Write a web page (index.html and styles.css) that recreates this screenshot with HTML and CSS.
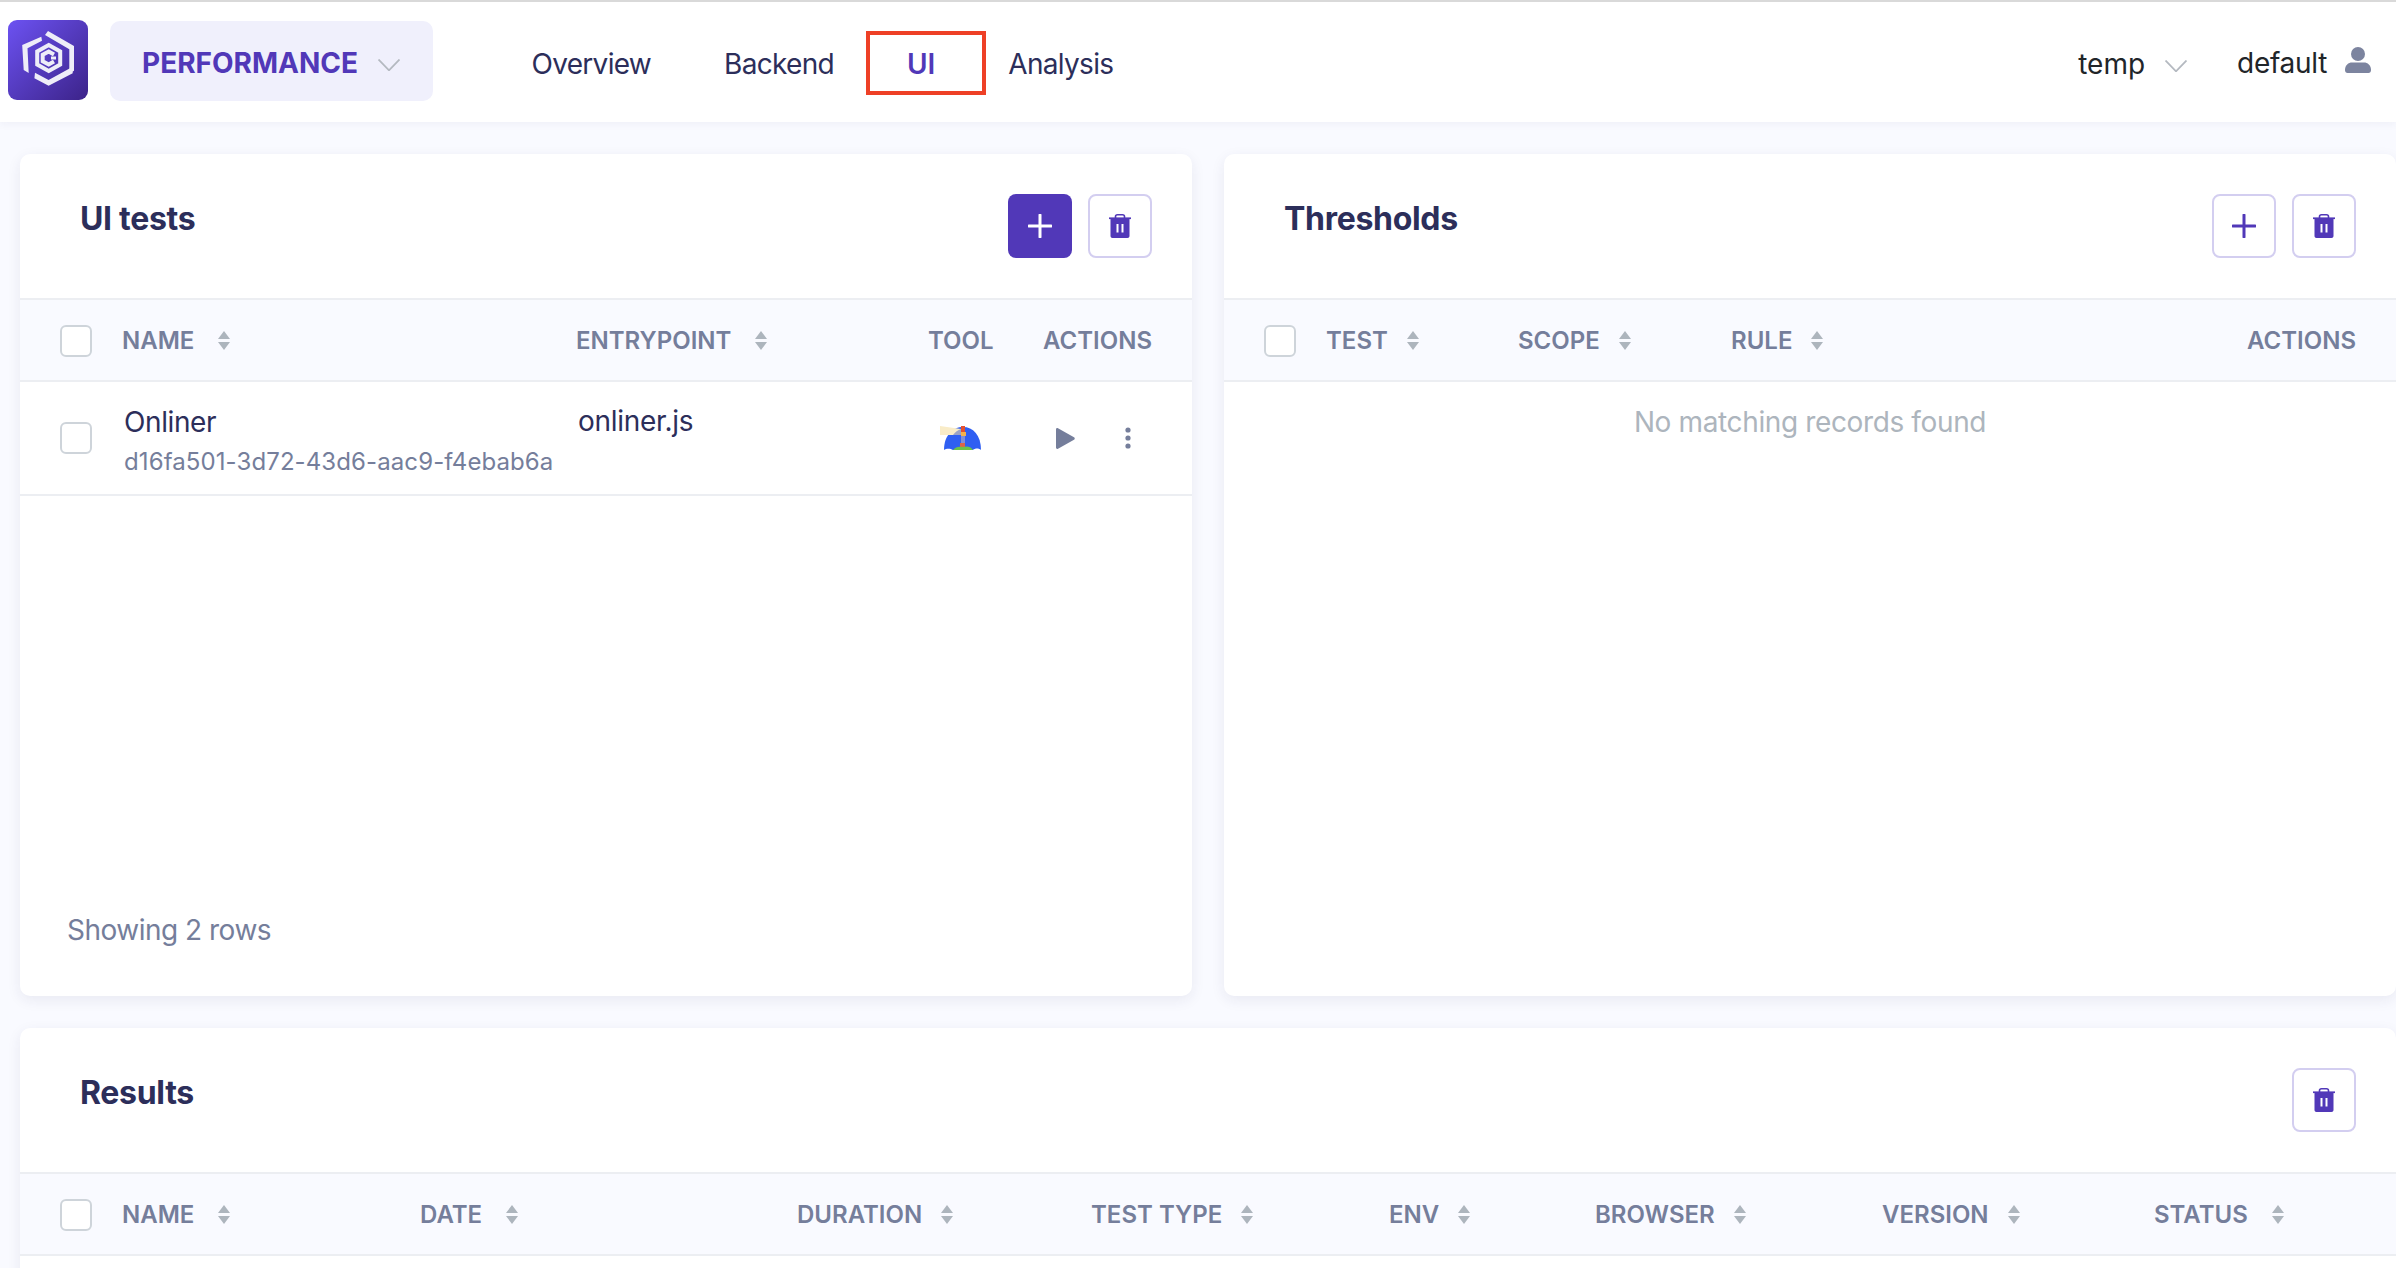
FILE: index.html
```html
<!DOCTYPE html>
<html lang="en">
<head>
    <meta charset="UTF-8">
    <meta name="viewport" content="width=device-width, initial-scale=1.0">
    <title>Performance - UI</title>
    <link rel="stylesheet" href="styles.css">
</head>
<body>
    <svg class="sprites" width="0" height="0">
        <symbol id="sort" viewBox="0 0 12 19"><path d="M6 0l6 8H0zM6 19l6-8H0z"/></symbol>
        <symbol id="trash" viewBox="0 0 22 24">
            <path d="M6.500 4V2.600C6.500 1.300 7.300.800 8.500.800h5c1.200 0 2 .5 2 1.800V4" fill="none" stroke="currentColor" stroke-width="1.600"/>
            <path d="M0 3.400h22v1.700H0z"/>
            <path fill-rule="evenodd" d="M1.500 5h19v17c0 1.200-.8 2-2 2h-15c-1.200 0-2-.8-2-2zM7.500 10v8.500h2V10zM12.500 10v8.500h2V10z"/>
        </symbol>
        <symbol id="plus" viewBox="0 0 24 24"><path d="M12 1v22M1 12h22" fill="none" stroke="currentColor" stroke-width="3" stroke-linecap="round"/></symbol>
        <symbol id="chevron" viewBox="0 0 22 12"><path d="M.5.500L11 11.300 21.500.500" fill="none" stroke="#b4b9c0" stroke-width="1.800"/></symbol>
    </svg>

    <header class="topbar">
        <div class="logo">
            <svg width="80" height="80" viewBox="0 0 80 80">
                <defs>
                    <linearGradient id="logoGrad" x1="0" y1="0" x2="1" y2="1">
                        <stop offset="0" stop-color="#6c52f2"/>
                        <stop offset="1" stop-color="#3c2389"/>
                    </linearGradient>
                </defs>
                <rect width="80" height="80" rx="9" fill="url(#logoGrad)"/>
                <g fill="#eeedf8">
                    <path d="M40 11l26 15v24.700l-4.700 2.500V29.300L37 15z"/>
                    <path d="M33.300 16.700L14.200 25l1.500 25 5 3-1.200-24.700L34 20.700z"/>
                    <path d="M64.700 46.700v6.600L40.600 65.700l-14.200-7.400.6-5.600 13.600 7.300z"/>
                </g>
                <g fill="none" stroke="#eeedf8">
                    <path d="M40.700 25l11.500 6.500v13L40.700 51l-11.500-6.500v-13z" stroke-width="4"/>
                    <path d="M46 34.500l-5.300-3-6 3.300v6.400l6 3.300 5.300-3" stroke-width="4"/>
                    <path d="M43 38h5" stroke-width="3"/>
                </g>
            </svg>
        </div>
        <div class="section-select">
            <span>PERFORMANCE</span>
            <svg class="chevron" width="22" height="12"><use href="#chevron"/></svg>
        </div>
        <nav class="tabs">
            <a class="tab">Overview</a>
            <a class="tab">Backend</a>
            <a class="tab active">UI</a>
            <a class="tab">Analysis</a>
        </nav>
        <div class="topbar-right">
            <div class="project">
                <span>temp</span>
                <svg class="chevron" width="22" height="12"><use href="#chevron"/></svg>
            </div>
            <div class="user">
                <span>default</span>
                <svg width="26" height="26" viewBox="0 0 26 26" fill="#7c849f">
                    <circle cx="13" cy="7" r="7"/>
                    <path d="M0 23c0-5 3.500-7.500 7-7.500h12c3.500 0 7 2.500 7 7.500 0 2-1 3-2.500 3h-21C1 26 0 25 0 23z"/>
                </svg>
            </div>
        </div>
    </header>

    <main class="page">
        <div class="top-cards">
            <section class="card">
                <div class="card-head">
                    <h2>UI tests</h2>
                    <div class="card-actions">
                        <button class="btn primary"><svg width="24" height="24"><use href="#plus"/></svg></button>
                        <button class="btn"><svg width="22" height="24"><use href="#trash"/></svg></button>
                    </div>
                </div>
                <div class="row head tests-grid">
                    <span class="check"></span>
                    <span class="col">NAME <svg class="sort wide"><use href="#sort"/></svg></span>
                    <span class="col">ENTRYPOINT <svg class="sort wide"><use href="#sort"/></svg></span>
                    <span class="col">TOOL</span>
                    <span class="col end">ACTIONS</span>
                </div>
                <div class="row body tests-grid">
                    <span class="check"></span>
                    <div class="name-cell">
                        <div class="name">Onliner</div>
                        <div class="uid">d16fa501-3d72-43d6-aac9-f4ebab6a</div>
                    </div>
                    <div class="entry">onliner.js</div>
                    <div class="tool">
                        <svg width="42" height="24" viewBox="0 0 42 24">
                            <path d="M4 24C4 9 13 1 23 1s18 8 18 23z" fill="#2f5ff2"/>
                            <path d="M0 0l21 3v6L0 9z" fill="#f9ecc8"/>
                            <path d="M13 9c2-3 5-5 8-6v6z" fill="#9aa3c6"/>
                            <path d="M21 0h4v6h-4z" fill="#e2502f"/>
                            <path d="M21 6h5v4h-5z" fill="#f5b14a"/>
                            <path d="M21 10h4v7h-4z" fill="#7f8fd8"/>
                            <path d="M20 17h5v4h-5z" fill="#d9664a"/>
                            <path d="M13 24c2-3 6-4 10-3 3-1 8-1 10 3z" fill="#6cc24a"/>
                            <path d="M4 24c2-1.500 6-2 9 0zM33 24c2-2 6-2 8 0z" fill="#fff"/>
                        </svg>
                    </div>
                    <div class="row-actions">
                        <svg width="19" height="21" viewBox="0 0 19 21" fill="#757e9b"><path d="M0 1.500C0 .3 1 -.3 2 .3l16 9c1 .6 1 1.800 0 2.400l-16 9c-1 .6-2 0-2-1.200z"/></svg>
                        <svg width="6" height="22" viewBox="0 0 6 22" fill="#757e9b"><circle cx="3" cy="3" r="2.600"/><circle cx="3" cy="11" r="2.600"/><circle cx="3" cy="19" r="2.600"/></svg>
                    </div>
                </div>
                <div class="card-foot">Showing 2 rows</div>
            </section>

            <section class="card">
                <div class="card-head">
                    <h2>Thresholds</h2>
                    <div class="card-actions">
                        <button class="btn"><svg width="24" height="24"><use href="#plus"/></svg></button>
                        <button class="btn"><svg width="22" height="24"><use href="#trash"/></svg></button>
                    </div>
                </div>
                <div class="row head thresholds-grid">
                    <span class="check"></span>
                    <span class="col">TEST <svg class="sort"><use href="#sort"/></svg></span>
                    <span class="col">SCOPE <svg class="sort"><use href="#sort"/></svg></span>
                    <span class="col">RULE <svg class="sort"><use href="#sort"/></svg></span>
                    <span class="col end">ACTIONS</span>
                </div>
                <div class="empty">No matching records found</div>
            </section>
        </div>

        <section class="card results">
            <div class="card-head">
                <h2>Results</h2>
                <div class="card-actions">
                    <button class="btn"><svg width="22" height="24"><use href="#trash"/></svg></button>
                </div>
            </div>
            <div class="row head results-grid">
                <span class="check"></span>
                <span class="col">NAME <svg class="sort wide"><use href="#sort"/></svg></span>
                <span class="col">DATE <svg class="sort wide"><use href="#sort"/></svg></span>
                <span class="col">DURATION <svg class="sort"><use href="#sort"/></svg></span>
                <span class="col">TEST TYPE <svg class="sort"><use href="#sort"/></svg></span>
                <span class="col">ENV <svg class="sort"><use href="#sort"/></svg></span>
                <span class="col">BROWSER <svg class="sort"><use href="#sort"/></svg></span>
                <span class="col">VERSION <svg class="sort"><use href="#sort"/></svg></span>
                <span class="col">STATUS <svg class="sort wide"><use href="#sort"/></svg></span>
            </div>
        </section>
    </main>
</body>
</html>
```

FILE: styles.css
```css
* {
    box-sizing: border-box;
}
html, body {
    height: 100%;
    overflow: hidden;
}
body {
    margin: 0;
    background-color: #f9faff;
    font-family: Inter, "Noto Sans", sans-serif;
    font-size: 28px;
    color: #2c2e5a;
}
.sprites {
    position: absolute;
}

/* top bar */
.topbar {
    display: flex;
    align-items: center;
    height: 122px;
    padding: 0 25px 2px 8px;
    background-color: #fff;
    border-top: 2px solid #d9d9d9;
    box-shadow: 0 2px 8px rgba(40, 40, 90, 0.05);
}
.logo {
    display: flex;
    margin-top: -2px;
}
.section-select {
    display: flex;
    align-items: center;
    width: 323px;
    height: 80px;
    margin-left: 22px;
    padding-left: 32px;
    padding-top: 4px;
    border-radius: 10px;
    background-color: #f0f0fc;
    color: #5138b8;
    font-weight: 700;
}
.section-select .chevron {
    margin-left: 20px;
    margin-top: 3px;
}
.tabs {
    display: flex;
    margin-left: 62px;
    margin-top: 6px;
    letter-spacing: -0.7px;
}
.tab {
    position: relative;
    padding: 0 36.500px;
}
.tab.active {
    color: #5138b8;
    font-weight: 600;
    letter-spacing: 0;
}
.tab.active::after {
    content: "";
    position: absolute;
    top: -16px;
    bottom: -14px;
    left: -4px;
    right: -14px;
    border: 4px solid #ee4026;
}
.topbar-right {
    display: flex;
    align-items: center;
    margin-left: auto;
    color: #212529;
}
.project {
    display: flex;
    align-items: center;
    margin-top: 6px;
}
.project .chevron {
    margin-left: 20px;
    margin-top: 4px;
}
.user {
    display: flex;
    align-items: center;
    margin-left: 50px;
    margin-top: 3px;
    letter-spacing: -0.3px;
}
.user svg {
    margin-left: 18px;
    margin-top: -5px;
}

/* cards */
.page {
    padding: 32px 0 0 20px;
}
.top-cards {
    display: grid;
    grid-template-columns: 1172px 1172px;
    gap: 32px;
}
.card {
    display: flex;
    flex-direction: column;
    height: 842px;
    background-color: #fff;
    border-radius: 10px;
    box-shadow: 0 4px 14px rgba(40, 40, 90, 0.08);
}
.card.results {
    margin-top: 32px;
    height: 400px;
}
.card-head {
    display: flex;
    justify-content: space-between;
    height: 144px;
    padding: 40px 40px 0 60px;
}
.card-head h2 {
    margin: 2px 0 0;
    font-size: 32px;
    font-weight: 700;
    letter-spacing: -0.3px;
    line-height: 46px;
}
.card-actions {
    display: flex;
    gap: 16px;
}
.btn {
    display: flex;
    align-items: center;
    justify-content: center;
    width: 64px;
    height: 64px;
    padding: 0;
    border: 2px solid #d3cef0;
    border-radius: 8px;
    background-color: #fff;
    color: #5138b8;
    fill: #5138b8;
}
.btn.primary {
    border: none;
    background-color: #5138b8;
    color: #fff;
    fill: #fff;
}

/* tables */
.row {
    display: grid;
    align-items: center;
}
.row.head {
    height: 84px;
    padding-top: 1px;
    background-color: #f9faff;
    border-top: 2px solid #eceef2;
    border-bottom: 2px solid #eceef2;
    color: #757e9b;
    font-size: 24px;
    font-weight: 600;
}
.row.body {
    height: 114px;
    border-bottom: 2px solid #eceef2;
}
.tests-grid {
    grid-template-columns: 102px 454px 352px 116px 108px;
}
.thresholds-grid {
    grid-template-columns: 102px 192px 213px 1fr 200px;
    padding-right: 40px;
}
.results-grid {
    grid-template-columns: 102px 298px 377px 294px 298px 206px 287px 272px 1fr;
}
.check {
    width: 32px;
    height: 32px;
    margin-left: 40px;
    background-color: #fff;
    border: 2px solid #ced4da;
    border-radius: 6px;
}
.col {
    display: flex;
    align-items: center;
    white-space: pre;
}
.col.end {
    justify-content: flex-end;
}
.sort {
    width: 12px;
    height: 19px;
    margin-left: 13px;
    fill: #adb5bd;
}
.sort.wide {
    margin-left: 18px;
}
.name-cell {
    padding-left: 2px;
    margin-top: 10px;
}
.name {
    letter-spacing: -0.4px;
    line-height: 38px;
}
.uid {
    color: #757e9b;
    font-size: 24px;
    letter-spacing: 0.1px;
    line-height: 42px;
}
.entry {
    padding-left: 2px;
    margin-top: -34px;
    letter-spacing: -0.3px;
}
.tool {
    display: flex;
    padding-left: 12px;
}
.row-actions {
    display: flex;
    align-items: center;
    justify-content: space-between;
    padding: 0 21px 0 12px;
}
.card-foot {
    margin-top: auto;
    padding: 0 0 49px 47px;
    color: #757e9b;
    letter-spacing: -0.5px;
}
.empty {
    padding-top: 23px;
    color: #adb5bd;
    letter-spacing: -0.37px;
    text-align: center;
}
```
